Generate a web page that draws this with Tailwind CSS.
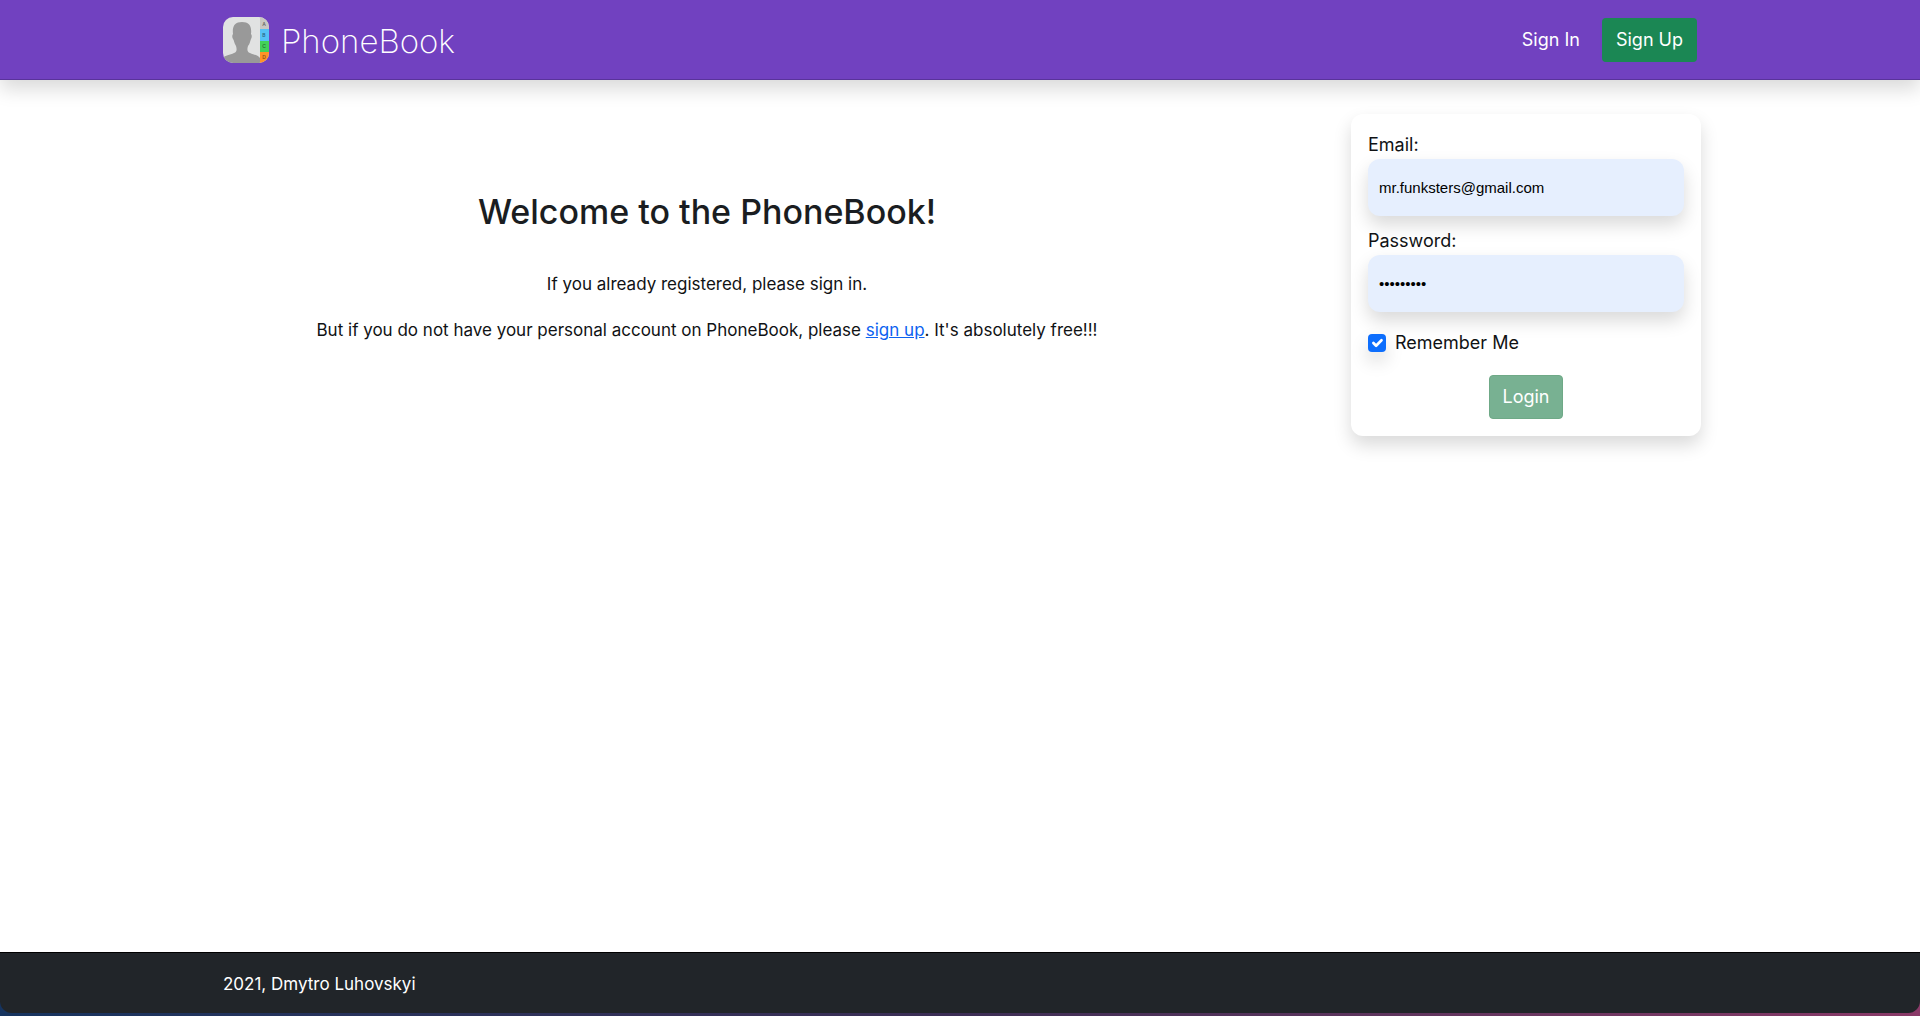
<!DOCTYPE html>
<html lang="en">
<head>
<meta charset="utf-8">
<meta name="viewport" content="width=device-width, initial-scale=1">
<title>PhoneBook</title>
<script src="https://cdn.jsdelivr.net/npm/@tailwindcss/browser@4"></script>
</head>
<body class="flex min-h-screen flex-col bg-white font-[Inter,sans-serif] text-lg leading-7 text-[#101214]">
<header class="bg-[#7141c0] border-b border-[#59339a] shadow-[0_9px_18px_rgba(0,0,0,0.15)]">
  <div class="mx-auto flex h-[79px] max-w-[1500px] items-center justify-between px-[13px]">
    <a href="#" class="flex items-center gap-3 text-white">
      <svg class="size-[46px]" viewBox="0 0 46 46" aria-hidden="true">
        <defs><clipPath id="tile"><rect width="46" height="46" rx="10"/></clipPath></defs>
        <g clip-path="url(#tile)">
          <rect width="46" height="46" fill="#e1e2e2"/>
          <rect x="37" width="9" height="12" fill="#c9c7c2"/>
          <rect x="37" y="12" width="9" height="12" fill="#55c1f5"/>
          <rect x="37" y="24" width="9" height="11" fill="#43d158"/>
          <rect x="37" y="35" width="9" height="11" fill="#ff9326"/>
          <path d="M0 46V41C2 38 7 38 11 36C14 35 14 32 13 29C11 26 11 23 10 22C9 20 9 18 10 17C9 9 12 5 19 5C26 5 29 9 28 17C29 18 29 20 28 22C27 24 27 27 25 29C24 32 24 35 27 36C31 38 35 38 37 41V46Z" fill="#999"/>
          <g font-family="Inter, sans-serif" font-size="5" font-weight="600" fill="#000" fill-opacity=".5" text-anchor="middle"><text x="41" y="9">A</text><text x="41" y="20">B</text><text x="41" y="31">C</text><text x="41" y="42">D</text></g>
        </g>
      </svg>
      <span class="pt-0.5 text-[33px] font-extralight">PhoneBook</span>
    </a>
    <nav class="flex items-center gap-[22px]">
      <a href="#" class="text-white">Sign In</a>
      <a href="#" class="rounded bg-[#1b8754] px-3.5 py-2 text-white">Sign Up</a>
    </nav>
  </div>
</header>
<main class="mx-auto flex w-full max-w-[1500px] grow items-start justify-between pt-[34px] pr-[9px]">
  <section class="w-2/3 pt-[76px] text-center text-[17px]">
    <h1 class="text-[34px] leading-[44px] font-medium text-[#1a1d21]">Welcome to the PhoneBook!</h1>
    <p class="mt-9">If you already registered, please sign in.</p>
    <p class="mt-[18px]">But if you do not have your personal account on PhoneBook, please <a href="#" class="text-[#0d62f0] underline">sign up</a>. It's absolutely free!!!</p>
  </section>
  <form class="w-[350px] rounded-xl bg-white p-[17px] shadow-[0_9px_18px_rgba(0,0,0,0.15)]">
    <label for="email" class="block">Email:</label>
    <input id="email" type="email" value="mr.funksters@gmail.com" class="block h-[57px] w-full rounded-xl bg-[#e6effe] px-[11px] font-['Liberation_Sans',sans-serif] text-[15px] text-black shadow-[0_9px_18px_rgba(0,0,0,0.15)]">
    <label for="password" class="mt-[11px] block">Password:</label>
    <input id="password" type="password" value="phonebook" class="block h-[57px] w-full rounded-xl bg-[#e6effe] px-[11px] font-['Liberation_Sans',sans-serif] text-[15px] text-black shadow-[0_9px_18px_rgba(0,0,0,0.15)]">
    <div class="mt-[17px] flex items-center gap-[9px]">
      <span class="grid size-[18px]">
        <input id="remember" type="checkbox" checked class="col-start-1 row-start-1 size-[18px] appearance-none rounded bg-[#0d6efd] shadow-[0_9px_18px_rgba(0,0,0,0.15)]">
        <svg class="pointer-events-none col-start-1 row-start-1 size-[18px]" viewBox="0 0 20 20" fill="none" stroke="#fff" stroke-width="3" stroke-linecap="round" stroke-linejoin="round" aria-hidden="true"><path d="m6 10 3 3 6-6"/></svg>
      </span>
      <label for="remember">Remember Me</label>
    </div>
    <button type="button" class="mx-auto mt-[18px] block rounded border border-[#6fa987] bg-[#78b192] px-3 py-[7px] text-white">Login</button>
  </form>
</main>
<footer class="bg-linear-to-r from-[#16345f] via-[#3c2e55] to-[#8a3a68] pb-[3px]">
  <div class="rounded-b-xl border-t border-black bg-[#212529]">
    <p class="mx-auto max-w-[1500px] px-[13px] pt-[17px] pb-[15px] text-[17px] text-white">2021, Dmytro Luhovskyi</p>
  </div>
</footer>
</body>
</html>
